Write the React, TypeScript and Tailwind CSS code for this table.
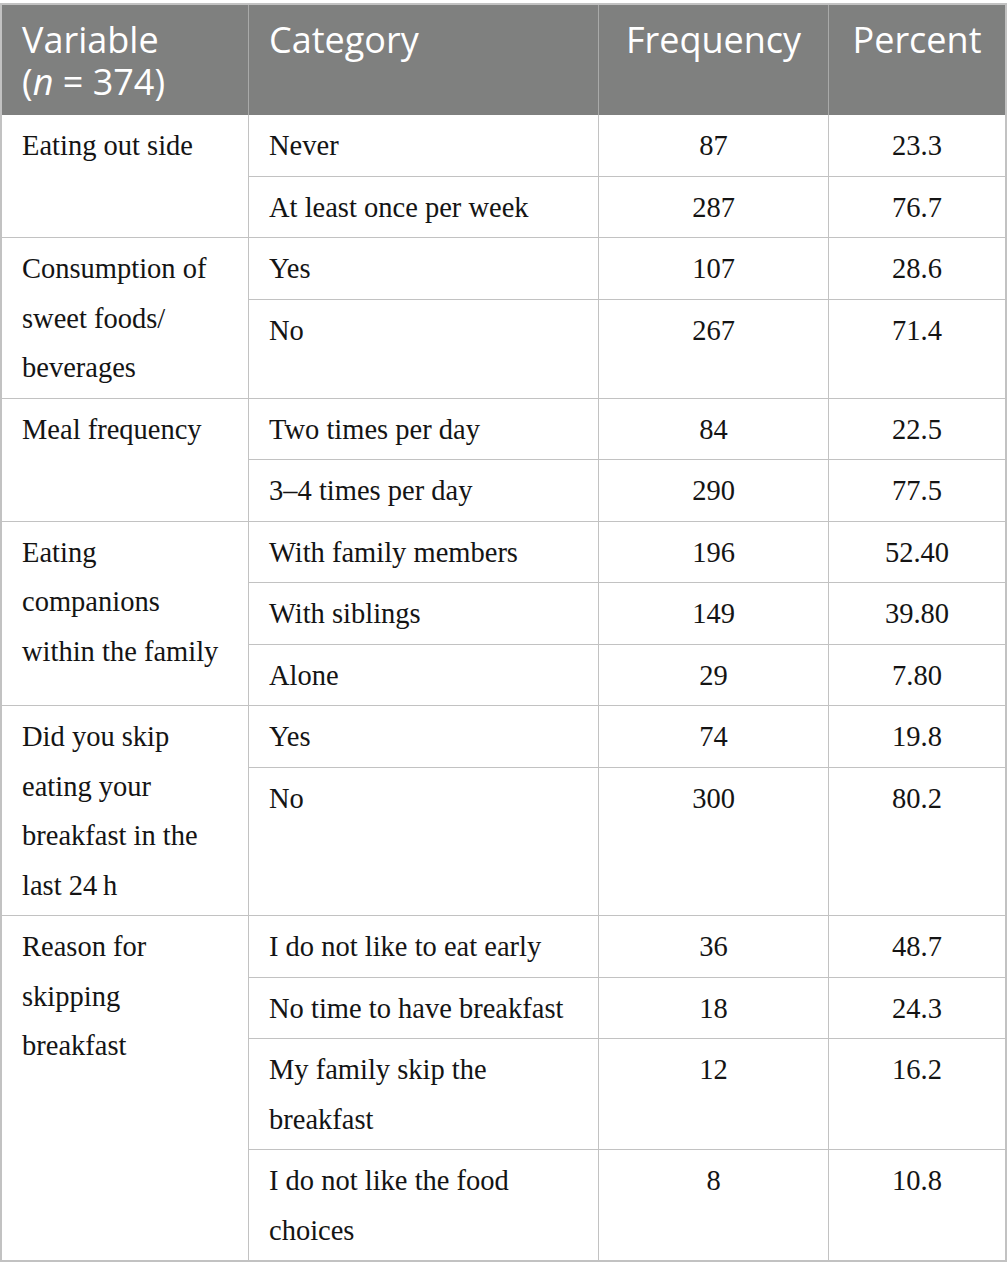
import React from "react";

type Row = { cat: string; freq: string; pct: string };
type Group = { v: string; rows: Row[] };

const groups: Group[] = [
  {
    v: "Eating out side",
    rows: [
      { cat: "Never", freq: "87", pct: "23.3" },
      { cat: "At least once per week", freq: "287", pct: "76.7" },
    ],
  },
  {
    v: "Consumption of sweet foods/ beverages",
    rows: [
      { cat: "Yes", freq: "107", pct: "28.6" },
      { cat: "No", freq: "267", pct: "71.4" },
    ],
  },
  {
    v: "Meal frequency",
    rows: [
      { cat: "Two times per day", freq: "84", pct: "22.5" },
      { cat: "3\u20134 times per day", freq: "290", pct: "77.5" },
    ],
  },
  {
    v: "Eating companions within the family",
    rows: [
      { cat: "With family members", freq: "196", pct: "52.40" },
      { cat: "With siblings", freq: "149", pct: "39.80" },
      { cat: "Alone", freq: "29", pct: "7.80" },
    ],
  },
  {
    v: "Did you skip eating your breakfast in the last 24\u2009h",
    rows: [
      { cat: "Yes", freq: "74", pct: "19.8" },
      { cat: "No", freq: "300", pct: "80.2" },
    ],
  },
  {
    v: "Reason for skipping breakfast",
    rows: [
      { cat: "I do not like to eat early", freq: "36", pct: "48.7" },
      { cat: "No time to have breakfast", freq: "18", pct: "24.3" },
      { cat: "My family skip the breakfast", freq: "12", pct: "16.2" },
      { cat: "I do not like the food choices", freq: "8", pct: "10.8" },
    ],
  },
];

const serif = { fontFamily: '"Liberation Serif", "Times New Roman", serif' };

export default function App() {
  return (
    <div className="w-[1007px] h-[1281px] bg-white pt-[3px]">
      <div className="w-[1007px] border-2 border-[#c2c2c2]">
        {/* header */}
        <div
          className="flex bg-[#7f807f] text-white text-[36px] leading-[42px]"
          style={{ fontFamily: '"Open Sans", "Noto Sans", sans-serif' }}
        >
          <div className="w-[247px] shrink-0 border-r border-[#a9aaa9] pl-[20px] pr-[10px] pt-[14px] pb-[12px]">
            <div className="h-[42px]">Variable</div>
            <div className="h-[42px]">
              (<span className="italic">n</span> = 374)
            </div>
          </div>
          <div className="w-[350px] shrink-0 border-r border-[#a9aaa9] pl-[20px] pt-[14px] pb-[12px]">
            Category
          </div>
          <div className="w-[230px] shrink-0 border-r border-[#a9aaa9] text-center pt-[14px] pb-[12px]">
            Frequency
          </div>
          <div className="flex-1 text-center pt-[14px] pb-[12px]">Percent</div>
        </div>
        {/* body */}
        <div className="text-[28.5px] leading-[49.5px] text-[#141414]" style={serif}>
          {groups.map((g, gi) => (
            <div
              key={gi}
              className={
                gi < groups.length - 1
                  ? "flex border-b border-[#c2c2c2]"
                  : "flex"
              }
            >
              <div className="w-[247px] shrink-0 border-r border-[#c2c2c2] pl-[20px] pr-[20px] pt-[6px] pb-[5px]">
                {g.v}
              </div>
              <div className="flex-1 flex flex-col">
                {g.rows.map((r, ri) => (
                  <div
                    key={ri}
                    className={
                      ri < g.rows.length - 1
                        ? "flex border-b border-[#c2c2c2]"
                        : "flex flex-1"
                    }
                  >
                    <div className="w-[350px] shrink-0 border-r border-[#c2c2c2] pl-[20px] pr-[20px] pt-[6px] pb-[5px]">
                      {r.cat}
                    </div>
                    <div className="w-[230px] shrink-0 border-r border-[#c2c2c2] text-center pt-[6px] pb-[5px]">
                      {r.freq}
                    </div>
                    <div className="flex-1 text-center pt-[6px] pb-[5px]">
                      {r.pct}
                    </div>
                  </div>
                ))}
              </div>
            </div>
          ))}
        </div>
      </div>
    </div>
  );
}
